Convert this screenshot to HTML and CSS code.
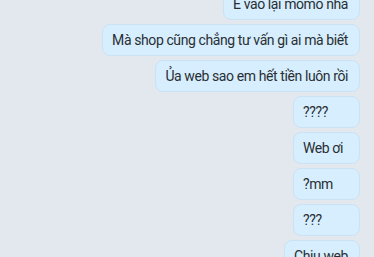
FILE: index.html
```html
<!DOCTYPE html>
<html lang="vi">
<head>
<meta charset="utf-8">
<link rel="stylesheet" href="styles.css">
</head>
<body>
<div class="chat">
  <div class="msg">E vào lại momo nha</div>
  <div class="msg">Mà shop cũng chẳng tư vấn gì ai mà biết</div>
  <div class="msg">Ủa web sao em hết tiền luôn rồi</div>
  <div class="msg">????</div>
  <div class="msg">Web ơi</div>
  <div class="msg">?mm</div>
  <div class="msg">???</div>
  <div class="msg">Chịu web</div>
</div>
</body>
</html>
```
FILE: styles.css
```css
html, body {
  margin: 0;
  padding: 0;
  background: #e3e8ef;
  overflow: hidden;
}
.chat {
  display: flex;
  flex-direction: column;
  align-items: flex-end;
  gap: 4px;
  padding-right: 14px;
  margin-top: -12px;
}
.msg {
  box-sizing: border-box;
  height: 32px;
  min-width: 67px;
  padding: 0 11px 1px 9px;
  display: flex;
  align-items: center;
  background: #d6eefe;
  border: 1px solid #cbe2f3;
  border-radius: 8px;
  font-family: Roboto, "Noto Sans", sans-serif;
  font-size: 14px;
  letter-spacing: -0.4px;
  color: #2a2e33;
  white-space: nowrap;
}
```
